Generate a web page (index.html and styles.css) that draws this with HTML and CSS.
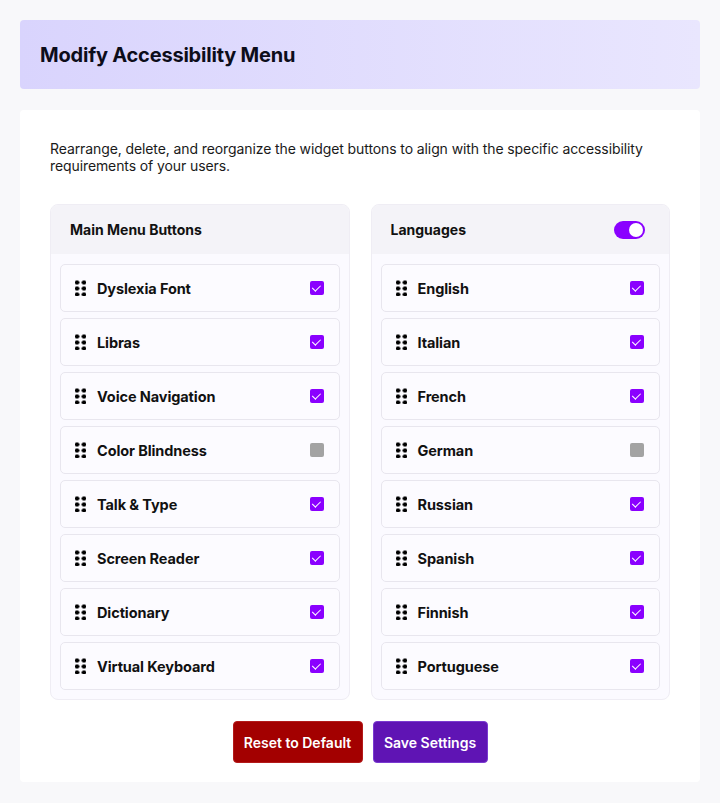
FILE: index.html
```html
<!DOCTYPE html>
<html lang="en">
<head>
  <meta charset="UTF-8" />
  <meta name="viewport" content="width=device-width, initial-scale=1.0"/>
  <title>Modify Accessibility Menu</title>
  <link rel="stylesheet" href="styles.css">
</head>
<body>
  <div class="page">
    <div class="page-header">
      <h1>Modify Accessibility Menu</h1>
    </div>

    <div class="card">
      <p class="intro">Rearrange, delete, and reorganize the widget buttons to align with the specific accessibility requirements of your users.</p>

      <div class="columns">
        <div class="panel">
          <div class="panel-head">
            <span>Main Menu Buttons</span>
          </div>
          <ul class="item-list">
            <li class="item"><span class="grip"></span><span class="item-name">Dyslexia Font</span><span class="check on"></span></li>
            <li class="item"><span class="grip"></span><span class="item-name">Libras</span><span class="check on"></span></li>
            <li class="item"><span class="grip"></span><span class="item-name">Voice Navigation</span><span class="check on"></span></li>
            <li class="item"><span class="grip"></span><span class="item-name">Color Blindness</span><span class="check"></span></li>
            <li class="item"><span class="grip"></span><span class="item-name">Talk &amp; Type</span><span class="check on"></span></li>
            <li class="item"><span class="grip"></span><span class="item-name">Screen Reader</span><span class="check on"></span></li>
            <li class="item"><span class="grip"></span><span class="item-name">Dictionary</span><span class="check on"></span></li>
            <li class="item"><span class="grip"></span><span class="item-name">Virtual Keyboard</span><span class="check on"></span></li>
          </ul>
        </div>

        <div class="panel">
          <div class="panel-head">
            <span>Languages</span>
            <span class="toggle on"></span>
          </div>
          <ul class="item-list">
            <li class="item"><span class="grip"></span><span class="item-name">English</span><span class="check on"></span></li>
            <li class="item"><span class="grip"></span><span class="item-name">Italian</span><span class="check on"></span></li>
            <li class="item"><span class="grip"></span><span class="item-name">French</span><span class="check on"></span></li>
            <li class="item"><span class="grip"></span><span class="item-name">German</span><span class="check"></span></li>
            <li class="item"><span class="grip"></span><span class="item-name">Russian</span><span class="check on"></span></li>
            <li class="item"><span class="grip"></span><span class="item-name">Spanish</span><span class="check on"></span></li>
            <li class="item"><span class="grip"></span><span class="item-name">Finnish</span><span class="check on"></span></li>
            <li class="item"><span class="grip"></span><span class="item-name">Portuguese</span><span class="check on"></span></li>
          </ul>
        </div>
      </div>

      <div class="actions">
        <button type="button" class="btn btn-reset">Reset to Default</button>
        <button type="button" class="btn btn-save">Save Settings</button>
      </div>
    </div>
  </div>
</body>
</html>
```

FILE: styles.css
```css
body {
  margin: 0;
  background: #f8f8fa;
  font-family: Inter, "Noto Sans", sans-serif;
  color: #111;
}
.page {
  padding: 20px 20px 21px;
}
.page-header {
  height: 69px;
  display: flex;
  align-items: center;
  padding: 0 20px;
  border-radius: 4px;
  background: linear-gradient(90deg, #d9d4fd 0%, #e9e6fe 100%);
}
.page-header h1 {
  margin: 0;
  font-size: 20px;
  font-weight: 700;
  letter-spacing: -0.2px;
  color: #0d0d1a;
}
.card {
  margin-top: 21px;
  background: #fff;
  border-radius: 4px;
  padding: 30px 30px 19px;
}
.intro {
  margin: 0 0 30px;
  font-size: 14px;
  line-height: 17px;
  color: #1a1a1a;
  letter-spacing: -0.1px;
}
.columns {
  display: grid;
  grid-template-columns: 1fr 1fr;
  gap: 21px;
}
.panel {
  background: #fbfaff;
  border: 1px solid #efedf4;
  border-radius: 8px;
  overflow: hidden;
}
.panel-head {
  height: 49px;
  display: flex;
  align-items: center;
  justify-content: space-between;
  padding: 0 24px 0 19px;
  background: #f4f3f8;
  font-size: 14px;
  font-weight: 700;
}
.toggle {
  width: 31px;
  height: 18px;
  border-radius: 9px;
  background: #8a00ff;
  position: relative;
}
.toggle::after {
  content: "";
  position: absolute;
  top: 2px;
  right: 2px;
  width: 14px;
  height: 14px;
  border-radius: 50%;
  background: #fff;
}
.item-list {
  list-style: none;
  margin: 0;
  padding: 10px 9px 9px 9px;
  display: flex;
  flex-direction: column;
  gap: 6px;
}
.item {
  height: 46px;
  display: flex;
  align-items: center;
  padding: 0 15px 0 14px;
  background: #fcfbff;
  border: 1px solid #e8e6ee;
  border-radius: 5px;
}
.grip {
  width: 11px;
  height: 16px;
  margin-right: 11px;
  background-image: radial-gradient(circle, #000 2.1px, transparent 2.4px);
  background-size: 7px 6px;
  background-position: -1.5px -0.5px;
}
.item-name {
  flex: 1;
  font-size: 14.5px;
  font-weight: 700;
  letter-spacing: -0.1px;
}
.check {
  width: 14px;
  height: 14px;
  border-radius: 2px;
  background: #a3a3a3;
  position: relative;
}
.check.on {
  background: #8a00ff;
}
.check.on::after {
  content: "";
  position: absolute;
  left: 4px;
  top: 1.5px;
  width: 3.5px;
  height: 7px;
  border: solid #fff;
  border-width: 0 1.6px 1.6px 0;
  transform: rotate(45deg);
}
.actions {
  display: flex;
  justify-content: center;
  gap: 10px;
  margin-top: 21px;
}
.btn {
  height: 42px;
  padding: 0 10px;
  font-family: Inter, sans-serif;
  font-size: 14px;
  font-weight: 600;
  color: #fff;
  border-radius: 4px;
  cursor: pointer;
}
.btn-reset {
  width: 130px;
  background: #a30000;
  border: 1px solid #b31a1a;
}
.btn-save {
  width: 115px;
  background: #5f14b4;
  border: 1px solid #7a3ad0;
}
```
